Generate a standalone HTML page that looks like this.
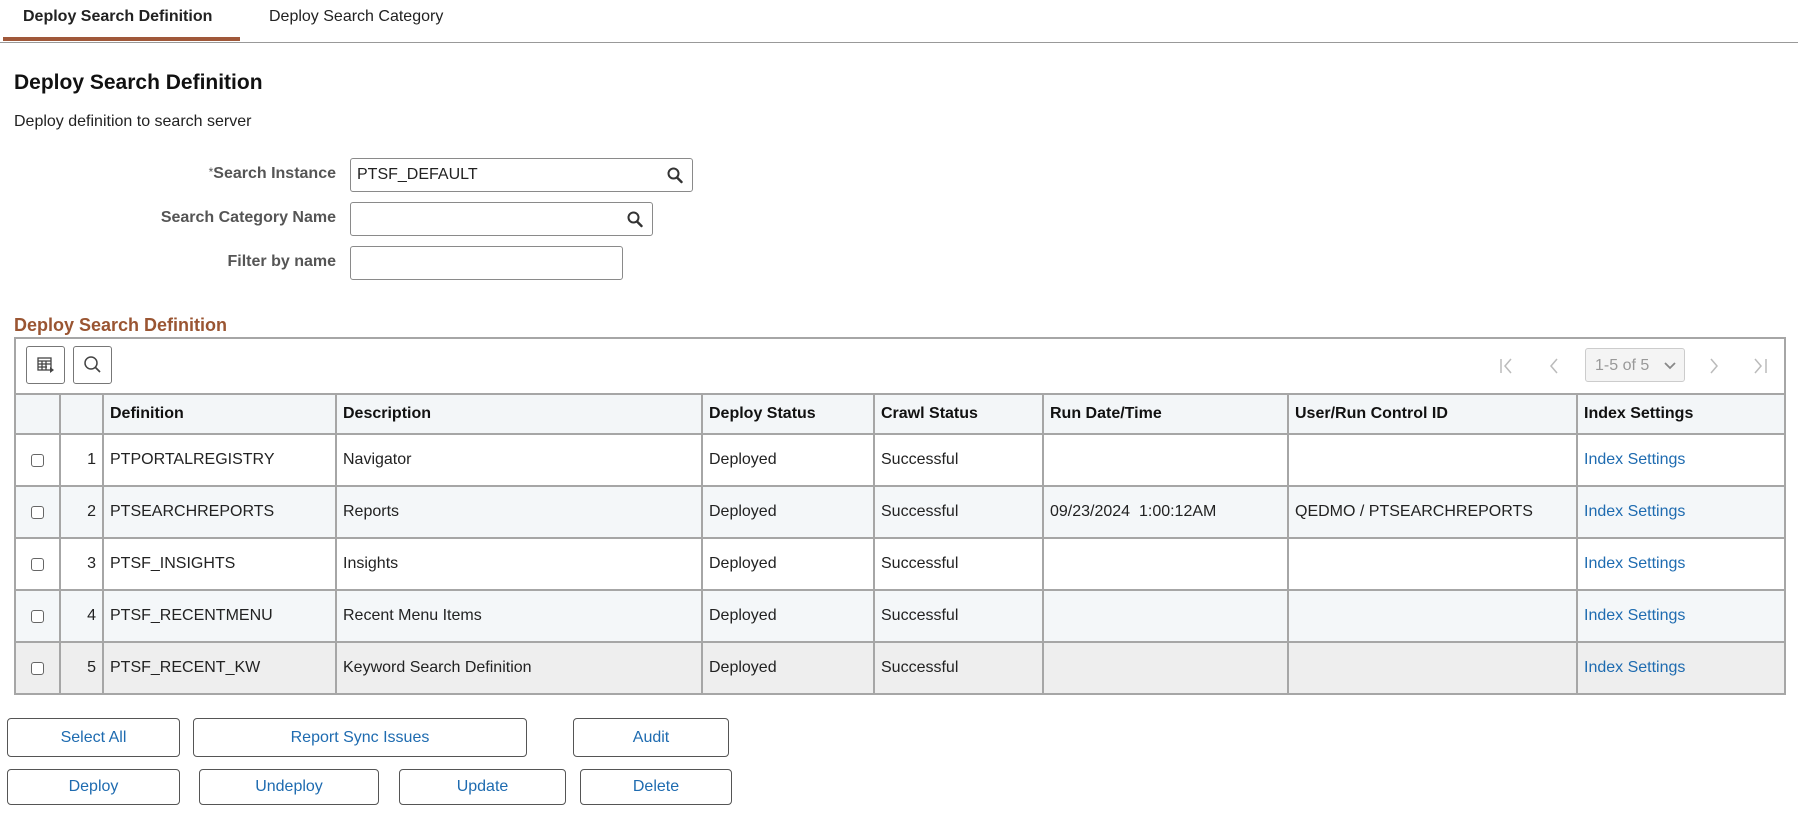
<!DOCTYPE html>
<html><head><meta charset="utf-8"><style>
*{box-sizing:border-box;margin:0;padding:0}
body{width:1798px;height:814px;background:#fff;font-family:"Liberation Sans",Arial,sans-serif;color:#222;position:relative;overflow:hidden}
.a{position:absolute;white-space:nowrap}
.lbl{position:absolute;right:1462px;font-size:16px;font-weight:bold;color:#555;text-align:right}
.inp{position:absolute;border:1px solid #8a8a8a;border-radius:3px;background:#fff;height:34px;font-size:16px;padding:7px 6px;color:#222}
.srch{position:absolute;right:9px;top:8px}
table{position:absolute;left:14px;top:393px;width:1772px;border-collapse:collapse;font-size:16px}
td,th{border:2px solid #a6a6a6;padding:0 6px;text-align:left;vertical-align:middle}
th{height:40px;background:#f3f6f8;font-weight:bold;color:#111}
td{height:52px}
tr.alt td{background:#f4f7f9}
tr.hov td{background:#eeeeee}
.lk{color:#1e6bb0}
.cb{width:13px;height:13px;border:1px solid #666;border-radius:3px;margin:auto;background:#fff}
.btn{position:absolute;border:1px solid #555;border-radius:4px;background:#fff;color:#1e6bb0;font-size:16px;text-align:center;line-height:37px;height:39px}
.btn2{height:36px;line-height:34px}
</style></head><body>
<div class="a" style="left:23px;top:8px;font-size:16px;font-weight:bold;color:#222">Deploy Search Definition</div>
<div class="a" style="left:269px;top:8px;font-size:16px;color:#222">Deploy Search Category</div>
<div class="a" style="left:3px;top:37px;width:237px;height:4px;background:#a0583a"></div>
<div class="a" style="left:0;top:42px;width:1798px;height:1px;background:#999"></div>
<div class="a" style="left:14px;top:71px;font-size:21px;font-weight:bold;color:#111">Deploy Search Definition</div>
<div class="a" style="left:14px;top:113px;font-size:16px">Deploy definition to search server</div>

<div class="lbl" style="top:165px"><span style="font-weight:normal;font-size:12px;vertical-align:top">*</span>Search Instance</div>
<div class="inp" style="left:350px;top:158px;width:343px">PTSF_DEFAULT
<svg class="srch" width="16" height="17" viewBox="0 0 16 17"><circle cx="6.5" cy="6.5" r="5" fill="none" stroke="#333" stroke-width="2"/><path d="M10 10.5 L14.5 15" stroke="#333" stroke-width="2.4" stroke-linecap="round"/></svg></div>
<div class="lbl" style="top:209px">Search Category Name</div>
<div class="inp" style="left:350px;top:202px;width:303px">
<svg class="srch" width="16" height="17" viewBox="0 0 16 17"><circle cx="6.5" cy="6.5" r="5" fill="none" stroke="#333" stroke-width="2"/><path d="M10 10.5 L14.5 15" stroke="#333" stroke-width="2.4" stroke-linecap="round"/></svg></div>
<div class="lbl" style="top:253px">Filter by name</div>
<div class="inp" style="left:350px;top:246px;width:273px"></div>

<div class="a" style="left:14px;top:315px;font-size:18px;font-weight:bold;color:#9a5532">Deploy Search Definition</div>
<div class="a" style="left:14px;top:337px;width:1772px;height:58px;border:2px solid #a6a6a6;border-bottom:none"></div>
<div class="a" style="left:26px;top:346px;width:39px;height:38px;border:1px solid #777;border-radius:3px">
<svg width="37" height="36" viewBox="0 0 37 36"><g fill="none" stroke="#444" stroke-width="1.3"><rect x="11" y="11" width="13" height="12"/><path d="M11 14h13M11 17h13M11 20h9M15 14v9M19 14v9"/></g><path d="M23 20l4 3-4 3z" fill="#444"/></svg></div>
<div class="a" style="left:73px;top:346px;width:39px;height:38px;border:1px solid #777;border-radius:3px">
<svg width="37" height="36" viewBox="0 0 37 36"><circle cx="17" cy="16" r="6" fill="none" stroke="#444" stroke-width="1.5"/><path d="M21.5 20.5L26 25" stroke="#444" stroke-width="1.7"/></svg></div>
<svg class="a" style="left:1497px;top:356px" width="20" height="20" viewBox="0 0 20 20"><path d="M4 3v14M14 3L8 10l6 7" fill="none" stroke="#bbb" stroke-width="1.5"/></svg>
<svg class="a" style="left:1545px;top:356px" width="20" height="20" viewBox="0 0 20 20"><path d="M12 3L6 10l6 7" fill="none" stroke="#bbb" stroke-width="1.5"/></svg>
<div class="a" style="left:1585px;top:348px;width:100px;height:34px;border:1px solid #ccc;border-radius:3px;background:#f4f4f4;color:#999;font-size:16px;padding:8px 9px">1-5 of 5
<svg style="position:absolute;right:8px;top:13px" width="12" height="8" viewBox="0 0 12 8"><path d="M1 1l5 5 5-5" fill="none" stroke="#888" stroke-width="1.8"/></svg></div>
<svg class="a" style="left:1703px;top:356px" width="20" height="20" viewBox="0 0 20 20"><path d="M8 3l6 7-6 7" fill="none" stroke="#bbb" stroke-width="1.5"/></svg>
<svg class="a" style="left:1750px;top:356px" width="20" height="20" viewBox="0 0 20 20"><path d="M5 3l6 7-6 7M16 3v14" fill="none" stroke="#bbb" stroke-width="1.5"/></svg>

<table>
<colgroup><col style="width:45px"><col style="width:43px"><col style="width:233px"><col style="width:366px"><col style="width:172px"><col style="width:169px"><col style="width:245px"><col style="width:289px"><col></colgroup>
<tr><th></th><th></th><th>Definition</th><th>Description</th><th>Deploy Status</th><th>Crawl Status</th><th>Run Date/Time</th><th>User/Run Control ID</th><th>Index Settings</th></tr>
<tr><td><div class="cb"></div></td><td style="text-align:right">1</td><td>PTPORTALREGISTRY</td><td>Navigator</td><td>Deployed</td><td>Successful</td><td></td><td></td><td class="lk">Index Settings</td></tr>
<tr class="alt"><td><div class="cb"></div></td><td style="text-align:right">2</td><td>PTSEARCHREPORTS</td><td>Reports</td><td>Deployed</td><td>Successful</td><td>09/23/2024&nbsp; 1:00:12AM</td><td>QEDMO / PTSEARCHREPORTS</td><td class="lk">Index Settings</td></tr>
<tr><td><div class="cb"></div></td><td style="text-align:right">3</td><td>PTSF_INSIGHTS</td><td>Insights</td><td>Deployed</td><td>Successful</td><td></td><td></td><td class="lk">Index Settings</td></tr>
<tr class="alt"><td><div class="cb"></div></td><td style="text-align:right">4</td><td>PTSF_RECENTMENU</td><td>Recent Menu Items</td><td>Deployed</td><td>Successful</td><td></td><td></td><td class="lk">Index Settings</td></tr>
<tr class="hov"><td><div class="cb"></div></td><td style="text-align:right">5</td><td>PTSF_RECENT_KW</td><td>Keyword Search Definition</td><td>Deployed</td><td>Successful</td><td></td><td></td><td class="lk">Index Settings</td></tr>
</table>

<div class="btn" style="left:7px;top:718px;width:173px">Select All</div>
<div class="btn" style="left:193px;top:718px;width:334px">Report Sync Issues</div>
<div class="btn" style="left:573px;top:718px;width:156px">Audit</div>
<div class="btn btn2" style="left:7px;top:769px;width:173px">Deploy</div>
<div class="btn btn2" style="left:199px;top:769px;width:180px">Undeploy</div>
<div class="btn btn2" style="left:399px;top:769px;width:167px">Update</div>
<div class="btn btn2" style="left:580px;top:769px;width:152px">Delete</div>
</body></html>
